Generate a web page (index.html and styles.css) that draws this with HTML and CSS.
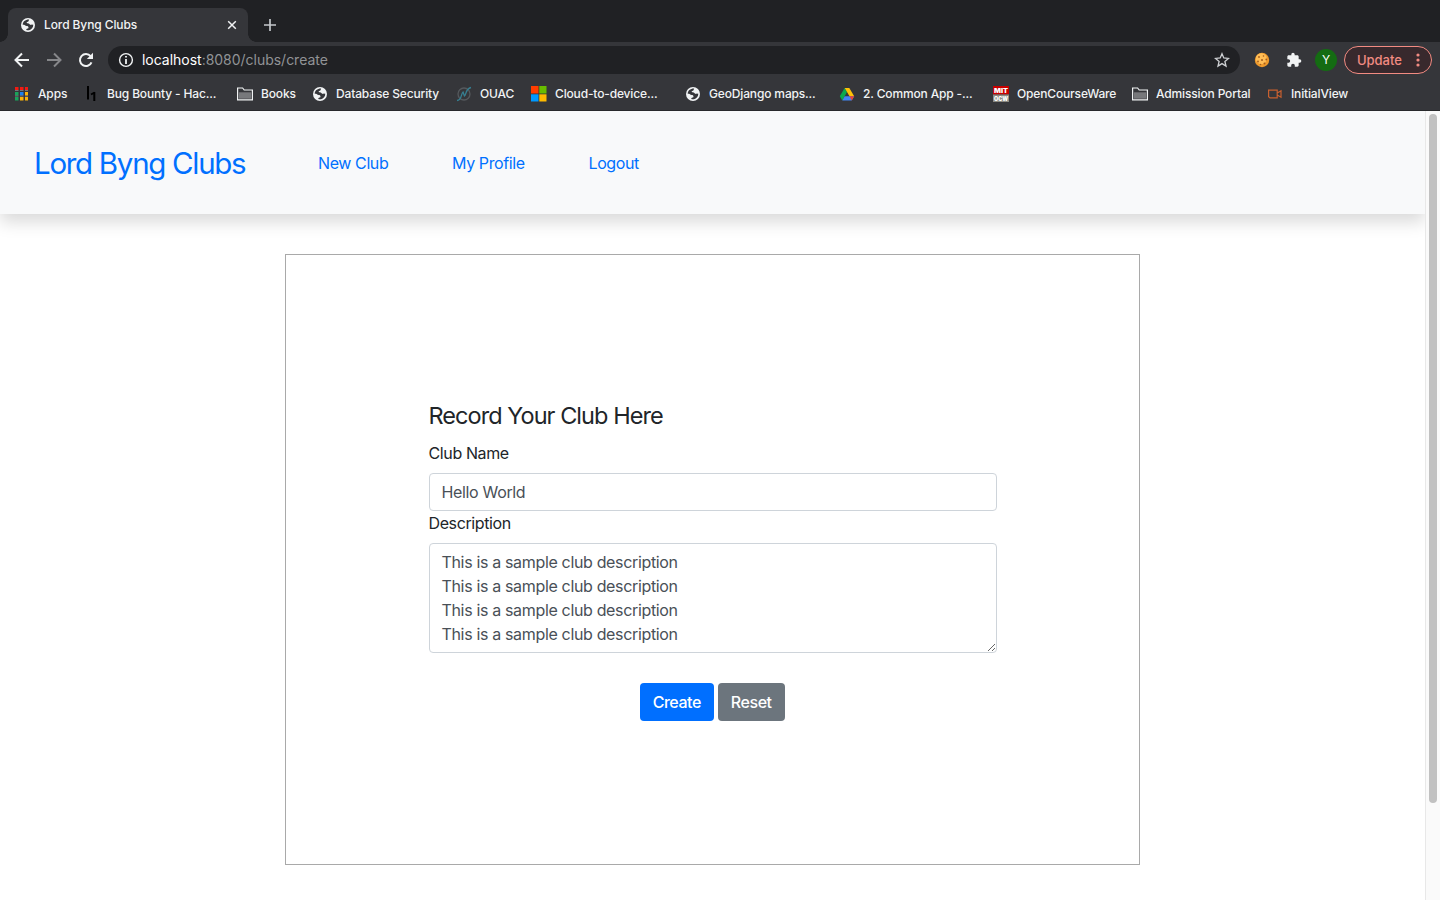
FILE: index.html
```html
<!DOCTYPE html>
<html lang="en">
<head>
<meta charset="utf-8">
<title>Lord Byng Clubs</title>
<link rel="stylesheet" href="styles.css">
</head>
<body>
<svg class="defs" aria-hidden="true">
  <symbol id="globe" viewBox="0 0 14 14"><circle cx="7" cy="7" r="7" fill="#f1f3f4"/><path d="M8.2 1.6C7.6 2.3 8 2.9 7.300 3.500C6.600 4 5.800 3.700 5.700 4.600C5.600 5.400 6.600 5.400 7.600 5.400C8.700 5.500 8.500 6.700 9.500 6.700C10.600 6.600 11.200 6.200 12.300 6.800C12.300 9.500 10.500 11.600 8 12.200C7.300 12.300 6 12.300 5.400 12.100C5.100 11.200 5.600 10.800 6.500 10.600C7.500 10.400 7.600 9.600 7.400 8.900C7 8 5.800 8.300 4.800 7.800C3.900 7.300 3.300 6.700 1.700 6.800C1.700 3.900 4.200 1.500 8.200 1.600Z" fill="#35363a"/><path d="M8.300 1.800C10.700 2.200 12.200 4.400 12.300 6.500C11 6 10.500 6.500 9.700 6.400C8.900 6.200 8.900 5 7.800 4.900C8.900 4.100 9.300 3 8.300 1.800Z" fill="#f1f3f4"/><path d="M1.800 7.200C3.500 7.200 4 8.300 5.300 8.500C6.500 8.700 6.300 9.800 5.500 10.200C4.900 10.600 4.900 11.300 4.800 11.900C3 11 1.800 9.200 1.800 7.200Z" fill="#f1f3f4"/></symbol>
  <symbol id="folder" viewBox="0 0 16 14"><path d="M.6 12.900V1H5.600L7.200 3H15.400V12.900Z" fill="#35363a" stroke="#f1f3f4" stroke-width="1.200"/><path d="M1.800 5.300H14.200V11.700H1.800Z" fill="#77787b"/></symbol>
</svg>

<header class="browser">
  <div class="tabs">
    <div class="tab">
      <svg class="favicon"><use href="#globe"/></svg>
      <span class="tab-title">Lord Byng Clubs</span>
      <svg class="close" viewBox="0 0 10 10"><path d="M1.200 1.200L8.800 8.800M8.800 1.200L1.200 8.800" stroke="#f1f3f4" stroke-width="1.500"/></svg>
    </div>
    <svg class="plus" viewBox="0 0 12 12"><path d="M6 0V12M0 6H12" stroke="#c4c7cb" stroke-width="1.700"/></svg>
  </div>

  <div class="toolbar">
    <svg class="tool" viewBox="0 0 16 16"><path d="M15 8H2M8 1.500L1.500 8L8 14.500" fill="none" stroke="#f1f3f4" stroke-width="2"/></svg>
    <svg class="tool" viewBox="0 0 16 16"><path d="M1 8H14M8 1.500L14.500 8L8 14.500" fill="none" stroke="#86878a" stroke-width="2"/></svg>
    <svg class="tool" viewBox="0 0 16 16"><path d="M13.500 10.300A6 6 0 1 1 12.600 4.200" fill="none" stroke="#f1f3f4" stroke-width="2"/><path d="M15 .8V7H8.800Z" fill="#f1f3f4"/></svg>
    <div class="omnibox">
      <svg class="info" viewBox="0 0 16 16"><circle cx="8" cy="8" r="6.400" fill="none" stroke="#f1f3f4" stroke-width="1.400"/><path d="M8 4V5.600M8 7V12" stroke="#f1f3f4" stroke-width="1.800"/></svg>
      <span class="url"><span class="host">localhost</span>:8080/clubs/create</span>
      <svg class="star" viewBox="0 0 16 16"><path d="M8 1.700L9.800 6L14.500 6.400L10.900 9.500L12 14.100L8 11.600L4 14.100L5.100 9.500L1.500 6.400L6.200 6Z" fill="none" stroke="#cfd1d4" stroke-width="1.300"/></svg>
    </div>
    <svg class="ext" viewBox="0 0 16 16"><circle cx="8" cy="8" r="7.200" fill="#ef9a2c"/><circle cx="7.300" cy="6.700" r="5.500" fill="#ffbd55"/><g fill="#a35c1c"><circle cx="5" cy="5" r=".9"/><circle cx="9.500" cy="4" r=".8"/><circle cx="8" cy="8" r="1"/><circle cx="4" cy="9.500" r=".9"/><circle cx="12.300" cy="7.500" r=".9"/><circle cx="10.500" cy="11.500" r="1"/><circle cx="6.500" cy="12.500" r=".8"/></g></svg>
    <svg class="ext puzzle" viewBox="0 0 24 24"><path d="M20.500 11H19V7c0-1.100-.9-2-2-2h-4V3.500a2.500 2.500 0 0 0-5 0V5H4c-1.100 0-1.990.9-1.990 2v3.800H3.500c1.490 0 2.700 1.210 2.700 2.700s-1.210 2.700-2.700 2.700H2V20c0 1.100.9 2 2 2h3.800v-1.500c0-1.490 1.210-2.700 2.700-2.700s2.700 1.210 2.700 2.700V22H17c1.100 0 2-.9 2-2v-4h1.500a2.500 2.500 0 0 0 0-5z" fill="#f1f3f4"/></svg>
    <span class="avatar">Y</span>
    <span class="update"><span class="update-text">Update</span><svg class="dots" viewBox="0 0 4 14"><g fill="#f28b82"><circle cx="2" cy="2" r="1.600"/><circle cx="2" cy="7" r="1.600"/><circle cx="2" cy="12" r="1.600"/></g></svg></span>
  </div>

  <nav class="bookmarks">
    <a class="bm apps"><svg viewBox="0 0 16 16"><path d="M1 1h3.500v3h-3.500zM6 1h3.500v3h-3.500zM11 1h3v3h-3z" fill="#f21b12"/><path d="M1 6h3.500v3.500h-3.500z" fill="#18a55a"/><path d="M6 6h3.500v3.500h-3.500z" fill="#1b82f0"/><path d="M11 6h3v3.500h-3zM6 11h3.500v3.500h-3.500zM11 11h3v3.500h-3z" fill="#fcb308"/><path d="M1 11h3.500v3.500h-3.500z" fill="#18a55a"/><path d="M1 4.500h3.500M6 4.500h3.500M11 4.500h3M1 10h3.500M6 10h3.500M11 10h3" stroke="#85868a" stroke-width=".8"/></svg><span>Apps</span></a>
    <a class="bm bounty"><svg viewBox="0 0 16 16"><path d="M5 0V13.500M11.300 6V15M8 8.500L11.600 6.500" stroke="#000" stroke-width="2" fill="none"/></svg><span>Bug Bounty - Hac...</span></a>
    <a class="bm"><svg viewBox="0 0 16 14"><use href="#folder"/></svg><span>Books</span></a>
    <a class="bm database"><svg class="globe"><use href="#globe"/></svg><span>Database Security</span></a>
    <a class="bm"><svg viewBox="0 0 16 16"><circle cx="8" cy="8" r="6" fill="none" stroke="#55595d" stroke-width="1.300"/><path d="M1 14.500C6 14.500 5 7 7 6L8.500 10C10.500 9 9 3 15 1.500" fill="none" stroke="#367f91" stroke-width="1.300"/></svg><span>OUAC</span></a>
    <a class="bm"><svg viewBox="0 0 16 16"><path d="M0 0h7.500v7.500h-7.500z" fill="#ff3d00"/><path d="M8.300 0h7.200v7.500h-7.200z" fill="#68bd00"/><path d="M0 8.300h7.500v7.200h-7.500z" fill="#0099ff"/><path d="M8.300 8.300h7.200v7.200h-7.200z" fill="#ffba00"/></svg><span>Cloud-to-device...</span></a>
    <a class="bm geo"><svg class="globe"><use href="#globe"/></svg><span>GeoDjango maps...</span></a>
    <a class="bm common"><svg viewBox="0 0 16 16"><path d="M5.600 2L8 6L3.300 14.500L.8 10.300Z" fill="#0ba94e"/><path d="M5.600 2H10.300L8 6Z" fill="#087c38"/><path d="M10.300 2L15.200 10.300H10.500L5.700 2Z" fill="#ffc107"/><path d="M5.700 10.300H15.200L12.700 14.500H3.300Z" fill="#4285f4"/><path d="M10.500 10.300H15.200L12.700 14.500Z" fill="#ea4335"/></svg><span>2. Common App -...</span></a>
    <a class="bm ocw"><svg viewBox="0 0 16 16"><path d="M0 0h16v8.500H0z" fill="#c90000"/><path d="M0 8.500h16V16H0z" fill="#8c8b83"/><text x="8" y="6.800" textLength="14" lengthAdjust="spacingAndGlyphs" class="mit">MIT</text><text x="8" y="14.500" textLength="14" lengthAdjust="spacingAndGlyphs" class="mit">OCW</text></svg><span>OpenCourseWare</span></a>
    <a class="bm admission"><svg viewBox="0 0 16 14"><use href="#folder"/></svg><span>Admission Portal</span></a>
    <a class="bm"><svg viewBox="0 0 16 16"><path d="M1.600 4.200H10.200V11.800H3L1.600 10.800ZM10.200 7L14 4.800V11.200L10.200 9Z" fill="none" stroke="#c8602f" stroke-width="1.200"/></svg><span>InitialView</span></a>
  </nav>
</header>

<div class="viewport">
  <main class="page">
    <nav class="site-nav">
      <a class="brand">Lord Byng Clubs</a>
      <a class="link new">New Club</a>
      <a class="link profile">My Profile</a>
      <a class="link">Logout</a>
    </nav>
    <form class="card">
      <h1 class="heading">Record Your Club Here</h1>
      <label class="label" for="name">Club Name</label>
      <input class="field" id="name" type="text" value="Hello World">
      <label class="label" for="desc">Description</label>
      <textarea class="field area" id="desc" rows="4">This is a sample club description
This is a sample club description
This is a sample club description
This is a sample club description</textarea>
      <div class="actions">
        <button class="btn primary" type="button">Create</button>
        <button class="btn secondary" type="button">Reset</button>
      </div>
    </form>
  </main>
  <div class="scrollbar"><div class="thumb"></div></div>
</div>
</body>
</html>
```

FILE: styles.css
```css
* { box-sizing: border-box; }
body { margin: 0; height: 900px; overflow: hidden; background: #fff; font-family: Inter, "Liberation Sans", sans-serif; color: #212529; }
svg { display: block; flex: none; }
.defs { display: none; }

.browser { height: 111px; background: #35363a; border-bottom: 1px solid #28292c; color: #f1f3f4; }
.tabs { height: 42px; padding: 8px 8px 0; display: flex; background: #202124; }
.tab { position: relative; width: 240px; height: 34px; padding: 0 11px 0 13px; display: flex; align-items: center; background: #35363a; border-radius: 8px 8px 0 0; }
.tab::before, .tab::after { content: ""; position: absolute; bottom: 0; width: 8px; height: 8px; }
.tab::before { left: -8px; background: radial-gradient(circle at 0 0, #202124 7.500px, #35363a 8px); }
.tab::after { right: -8px; background: radial-gradient(circle at 100% 0, #202124 7.500px, #35363a 8px); }
.favicon { width: 14px; height: 14px; }
.tab-title { margin-left: 9px; padding-bottom: 2px; flex: 1; font-size: 12px; font-weight: 500; letter-spacing: -0.1px; }
.close { width: 10px; height: 10px; }
.plus { width: 12px; height: 12px; margin: 11px 0 0 16px; }

.toolbar { height: 36px; padding: 0 8px 0 14px; display: flex; align-items: center; }
.tool { width: 16px; height: 16px; margin-right: 16px; }
.omnibox { width: 1132px; height: 28px; margin-left: -2px; padding: 0 10px; display: flex; align-items: center; background: #202124; border-radius: 14px; }
.info, .star { width: 16px; height: 16px; }
.url { margin-left: 8px; padding-bottom: 2px; flex: 1; font-size: 14px; letter-spacing: -0.02px; color: #919396; }
.host { color: #fff; }
.ext { width: 16px; height: 16px; margin-left: 14px; }
.puzzle { margin-left: 16px; }
.avatar { width: 22px; height: 22px; margin-left: 13px; border-radius: 50%; background: #146c12; color: #fff; font-size: 12px; line-height: 22px; text-align: center; }
.update { width: 88px; height: 28px; margin-left: 7px; padding: 0 11px 0 12px; display: flex; align-items: center; justify-content: space-between; border: 1px solid #f28b82; border-radius: 14px; background: #38292d; color: #f28b82; font-size: 13px; font-weight: 500; }
.update-text { letter-spacing: -0.05px; }
.dots { width: 4px; height: 14px; }

.bookmarks { height: 32px; padding-left: 14px; display: grid; grid-template-columns: 69px 154px 75px 144px 75px 154px 154px 154px 139px 135px 100px; align-items: center; }
.bm { display: flex; align-items: center; gap: 8px; font-size: 12px; font-weight: 500; letter-spacing: -0.15px; white-space: nowrap; }
.bm span { padding-bottom: 2px; }
.bm svg { width: 16px; height: 16px; overflow: visible; }
.bm .globe { width: 14px; height: 14px; margin: 0 1px; }
.mit { font: 900 6px Inter, sans-serif; fill: #fff; text-anchor: middle; letter-spacing: 0; }

.viewport { height: 789px; display: flex; }
.page { width: 1425px; overflow: hidden; }
.site-nav { height: 103px; padding-left: 34px; display: flex; align-items: center; background: #f8f9fa; box-shadow: 0 8px 16px rgba(0, 0, 0, 0.15); color: #007bff; }
.brand { width: 284px; padding-top: 1px; font-size: 29.500px; letter-spacing: -1.300px; color: #0070ff; }
.link { font-size: 16px; letter-spacing: -0.4px; color: #0070ff; }
.new { width: 134px; }
.profile { width: 136.500px; }

.card { width: 855px; height: 611px; margin: 40px auto 0; padding: 146px 142px 0 142.500px; border: 1px solid #a9a9a9; }
.heading { margin: 0 0 11px; font-size: 23.500px; line-height: 29px; font-weight: 400; letter-spacing: -0.950px; }
.label { display: block; height: 24px; margin-bottom: 8px; font-size: 16px; line-height: 24px; letter-spacing: -0.38px; }
.field { display: block; width: 100%; height: 38px; padding: 6px 12px; border: 1px solid #ced4da; border-radius: 4px; background: #fff; color: #495057; font: 16px/24px Inter, "Liberation Sans", sans-serif; letter-spacing: -0.34px; outline: none; }
.area { height: 110px; overflow: hidden; resize: vertical; }
.actions { margin-top: 30px; display: flex; justify-content: center; gap: 4px; }
.btn { height: 38px; padding: 0 1px 0 0; border: 0; border-radius: 4px; color: #fff; font: 500 16px/24px Inter, "Liberation Sans", sans-serif; letter-spacing: -0.45px; }
.primary { width: 74px; background: #006fff; }
.secondary { width: 67px; background: #6c757d; }

.scrollbar { width: 15px; padding: 3px 0 0 3px; border-left: 1px solid #e8e8e8; background: #fafafa; }
.thumb { width: 8px; height: 689px; border-radius: 4px; background: #c1c1c1; }
```
